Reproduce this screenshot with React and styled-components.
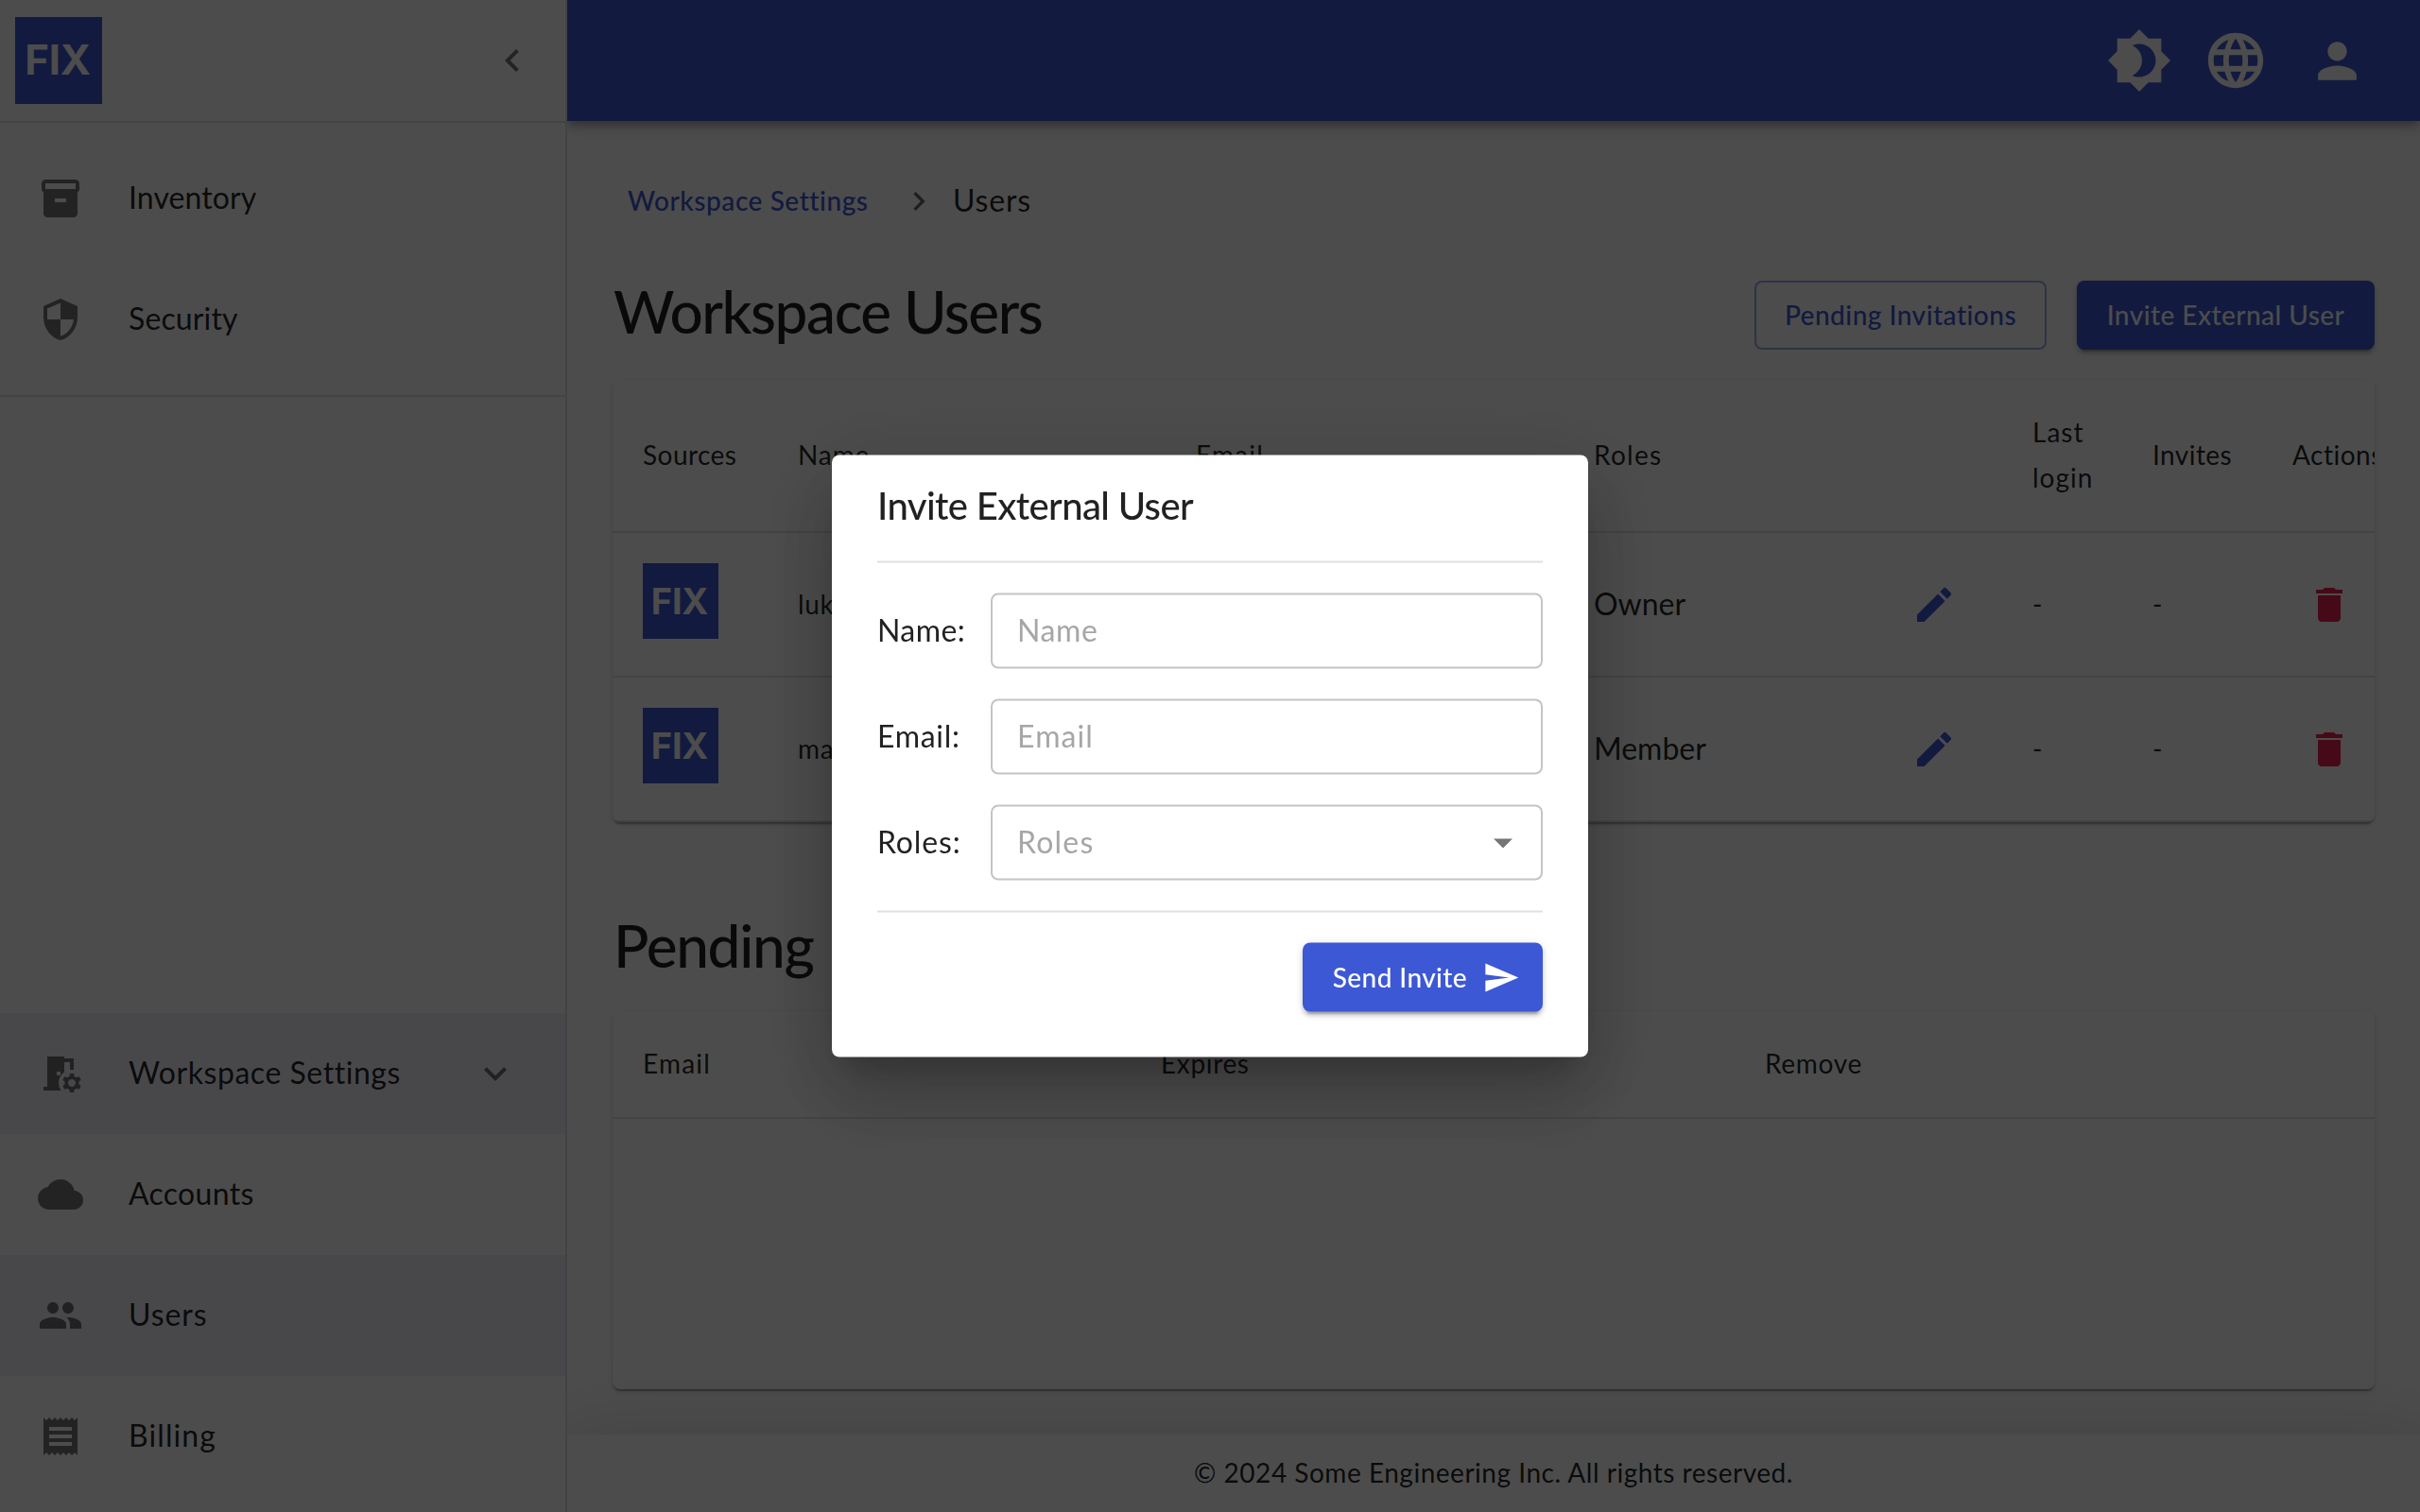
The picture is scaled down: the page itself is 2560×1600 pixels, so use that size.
import React from 'react';
import styled, { createGlobalStyle, css } from 'styled-components';
import {
  MdInventory2, MdSecurity, MdRoomPreferences, MdCloud, MdPeople, MdReceipt,
  MdExpandMore, MdChevronLeft, MdBrightness4, MdLanguage, MdPerson,
  MdNavigateNext, MdEdit, MdDelete, MdArrowDropDown, MdSend,
} from 'react-icons/md';

const primary = '#3d58d4';
const danger = '#e92150';
const ink = 'rgba(0, 0, 0, 0.87)';
const muted = 'rgba(0, 0, 0, 0.54)';
const line = '#e0e0e0';

const GlobalStyle = createGlobalStyle`
  *, *::before, *::after { box-sizing: border-box; }
  html, body { margin: 0; padding: 0; }
  body {
    width: 2560px;
    height: 1600px;
    overflow: hidden;
    background: #fff;
    color: ${ink};
    font-family: Lato, "Open Sans", sans-serif;
  }
  svg { display: block; flex: none; }
`;

const type = css`
  font-size: ${(p) => p.$size || 28}px;
  line-height: ${(p) => p.$lh || 48}px;
  letter-spacing: ${(p) => p.$track || 0}px;
  padding-bottom: 0.06em;
  white-space: nowrap;
`;

const Label = styled.span`
  display: block;
  ${type}
`;

const Shell = styled.div`
  display: grid;
  grid-template-columns: 600px 1fr;
  width: 2560px;
  height: 1600px;
`;

/* Sidebar */

const Sidebar = styled.aside`
  display: flex;
  flex-direction: column;
  background: #fff;
  border-right: 2px solid ${line};
  z-index: 1;
`;

const SidebarHeader = styled.div`
  display: flex;
  align-items: center;
  justify-content: space-between;
  height: 130px;
  padding: 0 32px 0 16px;
  border-bottom: 2px solid ${line};
  color: ${muted};
`;

const Logo = styled.div`
  display: flex;
  align-items: center;
  justify-content: center;
  width: ${(p) => p.$size}px;
  height: ${(p) => p.$size}px;
  padding-right: 2px;
  background: ${primary};
  color: #fff;
  font-family: Inter, sans-serif;
  font-weight: 700;
  font-size: ${(p) => p.$size * 0.475}px;
  letter-spacing: -0.2px;
  line-height: 1;
`;

const NavList = styled.nav`
  display: flex;
  flex-direction: column;
  padding: 16px 0;
  border-bottom: ${(p) => (p.$divided ? `2px solid ${line}` : 'none')};
  margin-top: ${(p) => (p.$bottom ? 'auto' : 0)};
`;

const NavItem = styled.a`
  display: flex;
  align-items: center;
  height: 128px;
  padding: 0 50px 0 40px;
  gap: 48px;
  color: ${muted};
  background: ${(p) => (p.$active ? 'rgba(61, 88, 212, 0.08)' : 'transparent')};

  ${Label} {
    flex: 1;
    color: ${ink};
  }
`;

/* Top bar */

const Column = styled.div`
  display: flex;
  flex-direction: column;
  min-width: 0;
`;

const TopBar = styled.header`
  display: flex;
  align-items: center;
  justify-content: flex-end;
  height: 128px;
  padding-right: 32px;
  background: ${primary};
  color: #fff;
  box-shadow: 0 4px 8px -2px rgba(0, 0, 0, 0.2), 0 8px 10px rgba(0, 0, 0, 0.14),
    0 2px 20px rgba(0, 0, 0, 0.12);
`;

const TopActions = styled.div`
  display: grid;
  grid-template-columns: 102px 102px 112px;
  align-items: center;
  justify-items: center;
`;

/* Content */

const Content = styled.main`
  flex: 1;
  padding: 0 48px;
`;

const Breadcrumbs = styled.div`
  display: flex;
  align-items: center;
  gap: 16px;
  height: 169px;
  color: rgba(0, 0, 0, 0.6);

  > ${Label} { color: ${ink}; }
`;

const CrumbLink = styled.a`
  width: 288px;
  padding-left: 16px;
  color: ${primary};
  font-weight: 500;
`;

const HeadingRow = styled.div`
  display: flex;
  align-items: center;
  justify-content: space-between;
  height: 73px;
  margin-top: ${(p) => p.$gap || 0}px;
  margin-bottom: 32px;
`;

const Heading = styled.h2`
  margin: 0;
  font-size: 62px;
  font-weight: 500;
  line-height: 73px;
  letter-spacing: ${(p) => p.$track}px;
  padding: 0 0 ${(p) => p.$lift}px 1px;
  color: ${ink};
  white-space: nowrap;
`;

const ButtonGroup = styled.div`
  display: flex;
  gap: 32px;
`;

const raised = css`
  background: ${primary};
  color: #fff;
  box-shadow: 0 6px 2px -4px rgba(0, 0, 0, 0.2), 0 4px 4px rgba(0, 0, 0, 0.14),
    0 2px 10px rgba(0, 0, 0, 0.12);
`;

const outlined = css`
  border: 2px solid rgba(61, 88, 212, 0.5);
  color: ${primary};
`;

const Button = styled.div`
  display: flex;
  align-items: center;
  justify-content: ${(p) => (p.$endIcon ? 'flex-end' : 'center')};
  gap: 16px;
  width: ${(p) => p.$width}px;
  height: 73px;
  padding-right: ${(p) => (p.$endIcon ? 24 : 0)}px;
  border-radius: 8px;
  font-weight: 500;
  ${(p) => (p.$outlined ? outlined : raised)}
`;

/* Tables */

const Paper = styled.section`
  height: ${(p) => p.$height}px;
  border-radius: 8px;
  background: #fff;
  overflow: hidden;
  box-shadow: 0 4px 2px -2px rgba(0, 0, 0, 0.2), 0 2px 2px rgba(0, 0, 0, 0.14),
    0 2px 6px rgba(0, 0, 0, 0.12);
`;

const Row = styled.div`
  display: grid;
  grid-template-columns: ${(p) => p.$columns};
  align-items: center;
  height: ${(p) => p.$height}px;
  border-bottom: 2px solid ${line};
`;

const Cell = styled.div`
  display: flex;
  align-items: center;
  justify-content: space-between;
  padding: 0 ${(p) => (p.$action ? 47 : 32)}px;
  align-self: ${(p) => (p.$top ? 'start' : 'center')};
  padding-top: ${(p) => (p.$top ? 32 : 0)}px;
  color: ${(p) => p.$color || 'inherit'};
`;

const EditIcon = styled(MdEdit)`
  margin-right: 16px;
  color: ${primary};
`;

const Footer = styled.footer`
  display: flex;
  align-items: center;
  justify-content: center;
  height: 82px;
  background: #fff;
  box-shadow: 0 22px 30px -14px rgba(0, 0, 0, 0.2), 0 48px 76px 6px rgba(0, 0, 0, 0.14),
    0 18px 92px 16px rgba(0, 0, 0, 0.12);
`;

/* Dialog */

const Backdrop = styled.div`
  position: fixed;
  inset: 0;
  z-index: 2;
  background: rgba(0, 0, 0, 0.7);
`;

const Dialog = styled.div`
  position: absolute;
  top: 50%;
  left: 50%;
  transform: translate(-50%, -50%);
  display: flex;
  flex-direction: column;
  width: 800px;
  height: 637px;
  padding: 0 48px 48px;
  border-radius: 8px;
  background: #fff;
  box-shadow: 0 22px 30px -14px rgba(0, 0, 0, 0.2), 0 48px 76px 6px rgba(0, 0, 0, 0.14),
    0 18px 92px 16px rgba(0, 0, 0, 0.12);
`;

const DialogTitle = styled.div`
  display: flex;
  align-items: center;
  height: 112px;
  padding-bottom: 4px;
  font-weight: 500;
`;

const Form = styled.div`
  display: grid;
  grid-template-columns: 120px 1fr;
  grid-auto-rows: 80px;
  align-items: center;
  row-gap: 32px;
  padding: 32px 0;
  border-top: 2px solid ${line};
  border-bottom: 2px solid ${line};
`;

const Field = styled.div`
  display: flex;
  align-items: center;
  justify-content: space-between;
  height: 80px;
  padding: 0 16px 0 26px;
  border: 2px solid #c4c4c4;
  border-radius: 8px;
  color: ${muted};

  ${Label} { color: #a6a6a6; }
`;

const DialogActions = styled.div`
  display: flex;
  justify-content: flex-end;
  padding-top: 32px;
`;

const mainNav = [
  { text: 'Inventory', Icon: MdInventory2, track: 0.09 },
  { text: 'Security', Icon: MdSecurity, track: 0.13 },
];

const settingsNav = [
  { text: 'Workspace Settings', Icon: MdRoomPreferences, track: 0.54, active: true, open: true },
  { text: 'Accounts', Icon: MdCloud, track: 0.3 },
  { text: 'Users', Icon: MdPeople, track: 0.9, active: true },
  { text: 'Billing', Icon: MdReceipt, track: 1.1 },
];

const userColumns = '164px 421px 421px 464px 127px 148px 160px';
const inviteColumns = '548px 639px 677px';

const users = [
  { name: 'lukas', email: '-', role: 'Owner', track: 0 },
  { name: 'matthias', email: '-', role: 'Member', track: 0 },
];

const fields = [
  { text: 'Name', labelTrack: 0.4, track: 0.6 },
  { text: 'Email', labelTrack: 0.7, track: 1.1 },
  { text: 'Roles', labelTrack: 0.85, track: 1.2, select: true },
];

function NavEntry({ text, Icon, track, active, open }) {
  return (
    <NavItem $active={active}>
      <Icon size={48} />
      <Label $size={32} $track={track}>{text}</Label>
      {open && <MdExpandMore size={48} />}
    </NavItem>
  );
}

function InviteDialog() {
  return (
    <Backdrop>
      <Dialog>
        <DialogTitle>
          <Label $size={40} $track={-0.62}>Invite External User</Label>
        </DialogTitle>
        <Form>
          {fields.map((f) => (
            <React.Fragment key={f.text}>
              <Label $size={32} $track={f.labelTrack}>{f.text}:</Label>
              <Field>
                <Label $size={32} $track={f.track}>{f.text}</Label>
                {f.select && <MdArrowDropDown size={48} />}
              </Field>
            </React.Fragment>
          ))}
        </Form>
        <DialogActions>
          <Button $endIcon $width={254}>
            <Label $track={0.4}>Send Invite</Label>
            <MdSend size={40} />
          </Button>
        </DialogActions>
      </Dialog>
    </Backdrop>
  );
}

export default function App() {
  return (
    <>
      <GlobalStyle />
      <Shell>
        <Sidebar>
          <SidebarHeader>
            <Logo $size={92}>FIX</Logo>
            <MdChevronLeft size={48} />
          </SidebarHeader>
          <NavList $divided>
            {mainNav.map((item) => <NavEntry key={item.text} {...item} />)}
          </NavList>
          <NavList $bottom>
            {settingsNav.map((item) => <NavEntry key={item.text} {...item} />)}
          </NavList>
        </Sidebar>

        <Column>
          <TopBar>
            <TopActions>
              <MdBrightness4 size={70} />
              <MdLanguage size={70} />
              <MdPerson size={61} />
            </TopActions>
          </TopBar>

          <Content>
            <Breadcrumbs>
              <CrumbLink><Label $track={0.56}>Workspace Settings</Label></CrumbLink>
              <MdNavigateNext size={40} />
              <Label $size={32} $track={0.8}>Users</Label>
            </Breadcrumbs>

            <HeadingRow>
              <Heading $track={-1.42} $lift={8}>Workspace Users</Heading>
              <ButtonGroup>
                <Button $outlined $width={309}><Label $track={0.5}>Pending Invitations</Label></Button>
                <Button $width={315}><Label $track={0.46}>Invite External User</Label></Button>
              </ButtonGroup>
            </HeadingRow>

            <Paper $height={468}>
              <Row $columns={userColumns} $height={162}>
                <Cell><Label $track={0.45}>Sources</Label></Cell>
                <Cell><Label $track={0.9}>Name</Label></Cell>
                <Cell><Label $track={1.2}>Email</Label></Cell>
                <Cell><Label $track={1.28}>Roles</Label></Cell>
                <Cell><Label $track={1}>Last<br />login</Label></Cell>
                <Cell><Label $track={0.45}>Invites</Label></Cell>
                <Cell><Label $track={0.5}>Actions</Label></Cell>
              </Row>
              {users.map((u) => (
                <Row key={u.name} $columns={userColumns} $height={153}>
                  <Cell $top><Logo $size={80}>FIX</Logo></Cell>
                  <Cell><Label $track={0.6}>{u.name}</Label></Cell>
                  <Cell><Label>{u.email}</Label></Cell>
                  <Cell>
                    <Label $size={32} $track={u.track}>{u.role}</Label>
                    <EditIcon size={48} />
                  </Cell>
                  <Cell><Label>-</Label></Cell>
                  <Cell><Label>-</Label></Cell>
                  <Cell $action $color={danger}><MdDelete size={48} /></Cell>
                </Row>
              ))}
            </Paper>

            <HeadingRow $gap={95}>
              <Heading $track={-1.28} $lift={3}>Pending Invitations</Heading>
            </HeadingRow>

            <Paper $height={400}>
              <Row $columns={inviteColumns} $height={114}>
                <Cell><Label $track={1.2}>Email</Label></Cell>
                <Cell><Label $track={0.65}>Expires</Label></Cell>
                <Cell><Label $track={0.7}>Remove</Label></Cell>
              </Row>
            </Paper>
          </Content>

          <Footer>
            <Label $track={0.52}>© 2024 Some Engineering Inc. All rights reserved.</Label>
          </Footer>
        </Column>
      </Shell>
      <InviteDialog />
    </>
  );
}
